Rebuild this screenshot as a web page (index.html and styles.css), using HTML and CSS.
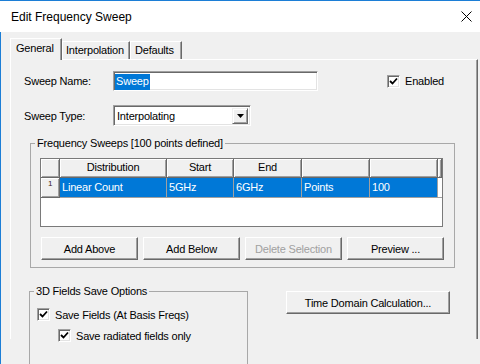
FILE: index.html
```html
<!DOCTYPE html>
<html lang="en">
<head>
    <meta charset="UTF-8">
    <title>Edit Frequency Sweep</title>
    <link rel="stylesheet" href="styles.css">
</head>
<body>
    <div class="window">
        <div class="titlebar">
            <span class="title">Edit Frequency Sweep</span>
            <svg class="close" width="11" height="11" viewBox="0 0 11 11">
                <path d="M0.5 0.5 L10.5 10.5 M10.5 0.5 L0.5 10.5" stroke="#000" stroke-width="1" fill="none"/>
            </svg>
        </div>
        <div class="content">
            <div class="tabs">
                <div class="tab active">General</div>
                <div class="tab tab-interp">Interpolation</div>
                <div class="tab tab-defaults">Defaults</div>
            </div>
            <div class="panel">
                <div class="field-row name-row">
                    <label class="field-label">Sweep Name:</label>
                    <div class="textbox"><span class="sel">Sweep</span></div>
                    <div class="check-item enabled">
                        <span class="checkbox">
                            <svg width="9" height="9" viewBox="0 0 9 9"><polyline points="1,4 3.5,6.5 8,1.5" fill="none" stroke="#000" stroke-width="1.8"/></svg>
                        </span>
                        <span>Enabled</span>
                    </div>
                </div>

                <div class="field-row type-row">
                    <label class="field-label">Sweep Type:</label>
                    <div class="select">
                        <span class="select-text">Interpolating</span>
                        <span class="select-btn">
                            <svg width="7" height="4" viewBox="0 0 7 4"><path d="M0 0 H7 L3.5 4 Z" fill="#000"/></svg>
                        </span>
                    </div>
                </div>

                <fieldset class="group sweeps">
                    <legend>Frequency Sweeps [100 points defined]</legend>
                    <div class="grid">
                        <div class="grid-row grid-head">
                            <div class="hcell"></div>
                            <div class="hcell">Distribution</div>
                            <div class="hcell">Start</div>
                            <div class="hcell">End</div>
                            <div class="hcell"></div>
                            <div class="hcell"></div>
                            <div class="hcell edge"></div>
                        </div>
                        <div class="grid-row grid-sel">
                            <div class="hcell rowhead">1</div>
                            <div class="cell">Linear Count</div>
                            <div class="cell">5GHz</div>
                            <div class="cell">6GHz</div>
                            <div class="cell">Points</div>
                            <div class="cell">100</div>
                            <div class="cell-blank"></div>
                        </div>
                    </div>
                    <div class="button-row">
                        <button class="btn">Add Above</button>
                        <button class="btn">Add Below</button>
                        <button class="btn" disabled>Delete Selection</button>
                        <button class="btn">Preview ...</button>
                    </div>
                </fieldset>

                <div class="bottom-row">
                    <fieldset class="group fields3d">
                        <legend>3D Fields Save Options</legend>
                        <div class="check-item">
                            <span class="checkbox">
                                <svg width="9" height="9" viewBox="0 0 9 9"><polyline points="1,4 3.5,6.5 8,1.5" fill="none" stroke="#000" stroke-width="1.8"/></svg>
                            </span>
                            <span>Save Fields (At Basis Freqs)</span>
                        </div>
                        <div class="check-item sub">
                            <span class="checkbox">
                                <svg width="9" height="9" viewBox="0 0 9 9"><polyline points="1,4 3.5,6.5 8,1.5" fill="none" stroke="#000" stroke-width="1.8"/></svg>
                            </span>
                            <span>Save radiated fields only</span>
                        </div>
                    </fieldset>
                    <button class="btn time-btn">Time Domain Calculation...</button>
                </div>
            </div>
        </div>
    </div>
</body>
</html>
```

FILE: styles.css
```css
* {
    box-sizing: border-box;
}
body {
    margin: 0;
    font-family: "Liberation Sans", Arial, sans-serif;
    font-size: 11px;
    letter-spacing: -0.2px;
    color: #000;
    background: #f0f0f0;
}
.window {
    width: 480px;
    height: 364px;
    overflow: hidden;
    background: #f0f0f0;
}

/* title bar */
.titlebar {
    height: 32px;
    background: #fff;
    border-top: 1px solid #1c7ed6;
    display: flex;
    align-items: center;
    justify-content: space-between;
    padding: 0 8px 0 11px;
}
.title {
    font-size: 12px;
    letter-spacing: 0;
}

.content {
    height: 332px;
    border-left: 1px solid #1c7ed6;
    padding: 6px 0 0 9px;
}

/* tabs */
.tabs {
    display: flex;
    align-items: flex-end;
    height: 21px;
}
.tab {
    height: 18px;
    padding: 2px 0 0 5px;
    border-top: 1px solid #fff;
    border-left: 1px solid #fff;
    border-right: 1px solid #696969;
    box-shadow: inset -1px 0 #a0a0a0;
    background: #f0f0f0;
    white-space: nowrap;
}
.tab.active {
    width: 52px;
    height: 22px;
    margin-bottom: -1px;
    padding-top: 3px;
    position: relative;
    z-index: 1;
}
.tab-interp {
    width: 68px;
    padding-left: 3px;
}
.tab-defaults {
    width: 52px;
    padding-left: 4px;
}

.panel {
    width: 468px;
    height: 280px;
    padding-left: 13px;
    border-top: 1px solid #fff;
    border-left: 1px solid #fff;
    border-right: 1px solid #696969;
    box-shadow: inset -1px 0 #a0a0a0;
}

/* form rows */
.field-row {
    display: flex;
    align-items: center;
}
.name-row {
    margin-top: 11px;
    height: 20px;
}
.type-row {
    margin-top: 14px;
    height: 21px;
}
.field-label {
    width: 89px;
}
.textbox {
    width: 205px;
    height: 20px;
    background: #fff;
    border: 1px solid;
    border-color: #a0a0a0 #fff #fff #a0a0a0;
    box-shadow: inset 1px 1px #696969, inset -1px -1px #e3e3e3;
    padding: 2px 1px 0;
    display: flex;
}
.sel {
    background: #0078d7;
    color: #fff;
    line-height: 15px;
    padding: 0 1px;
}
.select {
    width: 138px;
    height: 21px;
    background: #fff;
    border: 1px solid;
    border-color: #a0a0a0 #fff #fff #a0a0a0;
    box-shadow: inset 1px 1px #696969, inset -1px -1px #e3e3e3;
    display: flex;
    align-items: center;
    justify-content: space-between;
    padding: 2px 2px 2px 3px;
}
.select-btn {
    width: 16px;
    height: 16px;
    background: #f0f0f0;
    border: 1px solid;
    border-color: #f0f0f0 #696969 #696969 #f0f0f0;
    box-shadow: inset 1px 1px #fff, inset -1px -1px #a0a0a0;
    display: flex;
    align-items: center;
    justify-content: center;
}

/* checkboxes */
.check-item {
    display: flex;
    align-items: center;
    gap: 5px;
    height: 13px;
}
.enabled {
    margin-left: 69px;
}
.checkbox {
    width: 13px;
    height: 13px;
    background: #fff;
    border: 1px solid;
    border-color: #a0a0a0 #fff #fff #a0a0a0;
    box-shadow: inset 1px 1px #696969, inset -1px -1px #e3e3e3;
    display: flex;
    align-items: center;
    justify-content: center;
}

/* group boxes */
.group {
    margin: 0;
    border: 1px solid #a8a8a8;
}
.group legend {
    line-height: 14px;
    padding: 0 2px;
}
.sweeps {
    width: 425px;
    margin: 10px 0 0 6px;
    padding: 8px 0 7px 9px;
}
.sweeps legend {
    margin-left: -5px;
}
.fields3d {
    width: 219px;
    height: 90px;
    margin: 0 0 0 5px;
    padding: 10px 0 0 7px;
}
.fields3d legend {
    margin-left: -3px;
}
.fields3d .sub {
    margin: 8px 0 0 21px;
}

/* grid */
.grid {
    width: 403px;
    height: 69px;
    background: #fff;
    border: 1px solid #7a7a7a;
}
.grid-row {
    display: grid;
    grid-template-columns: 19px 107px 67px 68px 68px 68px 4px;
}
.grid-head {
    height: 19px;
}
.grid-sel {
    height: 20px;
}
.hcell {
    background: #f0f0f0;
    border-right: 1px solid #696969;
    border-bottom: 1px solid #696969;
    box-shadow: inset 1px 1px #fff, inset -1px -1px #a0a0a0;
    text-align: center;
    line-height: 17px;
}
.rowhead {
    font-size: 8px;
    line-height: 12px;
    color: #402020;
}
.cell {
    background: #0078d7;
    color: #fff;
    padding-left: 2px;
    line-height: 18px;
    border-right: 1px solid #a0a0a0;
    border-bottom: 1px solid #a0a0a0;
}
.cell-blank {
    border-bottom: 1px solid #a0a0a0;
}

/* buttons */
.button-row {
    display: flex;
    gap: 5px;
    margin: 10px 0 0 1px;
}
.btn {
    font-family: inherit;
    font-size: 11px;
    letter-spacing: -0.2px;
    color: #000;
    width: 97px;
    height: 23px;
    padding: 0;
    background: #f0f0f0;
    border: 1px solid;
    border-color: #fff #696969 #696969 #fff;
    box-shadow: inset -1px -1px #a0a0a0;
}
.btn:disabled {
    color: #a0a0a0;
}
.bottom-row {
    display: flex;
    align-items: flex-start;
    margin-top: 16px;
}
.time-btn {
    width: 164px;
    margin: 7px 0 0 38px;
}
```
